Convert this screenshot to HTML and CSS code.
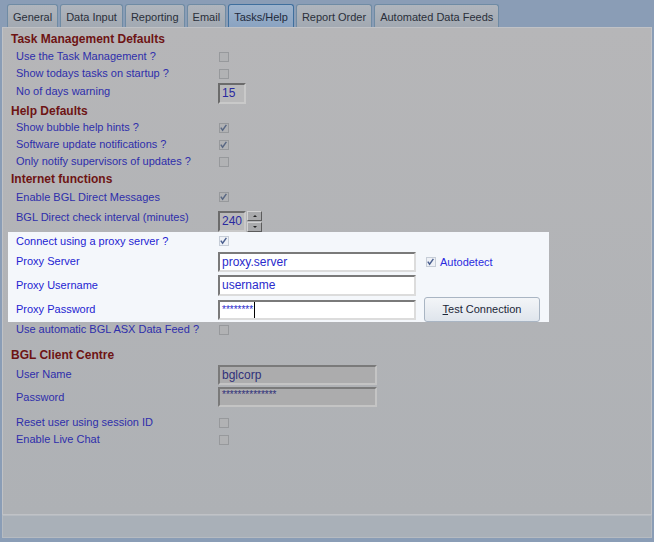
FILE: index.html
```html
<!DOCTYPE html>
<html lang="en">
<head>
  <meta charset="UTF-8" />
  <title>Tasks/Help</title>
  <link rel="stylesheet" href="styles.css">
</head>
<body>

<div class="window">
  <!-- Tab strip -->
  <div class="tabs">
    <span class="tab">General</span>
    <span class="tab">Data Input</span>
    <span class="tab">Reporting</span>
    <span class="tab">Email</span>
    <span class="tab active">Tasks/Help</span>
    <span class="tab">Report Order</span>
    <span class="tab">Automated Data Feeds</span>
  </div>

  <div class="panel">
    <div class="group">Task Management Defaults</div>
    <div class="row"><span class="lbl">Use the Task Management ?</span><span class="chk"></span></div>
    <div class="row"><span class="lbl">Show todays tasks on startup ?</span><span class="chk"></span></div>
    <div class="row field days"><span class="lbl lift">No of days warning</span><span class="inp small">15</span></div>

    <div class="group g2">Help Defaults</div>
    <div class="row"><span class="lbl">Show bubble help hints ?</span><span class="chk on"><svg viewBox="0 0 10 10"><path d="M2 4.6 L4 7.4 L8.2 1.6"/></svg></span></div>
    <div class="row"><span class="lbl">Software update notifications ?</span><span class="chk on"><svg viewBox="0 0 10 10"><path d="M2 4.6 L4 7.4 L8.2 1.6"/></svg></span></div>
    <div class="row"><span class="lbl">Only notify supervisors of updates ?</span><span class="chk"></span></div>

    <div class="group">Internet functions</div>
    <div class="row r18"><span class="lbl">Enable BGL Direct Messages</span><span class="chk on"><svg viewBox="0 0 10 10"><path d="M2 4.6 L4 7.4 L8.2 1.6"/></svg></span></div>
    <div class="row spin-row">
      <span class="lbl lift">BGL Direct check interval (minutes)</span>
      <span class="spin">
        <span class="inp small">240</span>
        <span class="spin-btns">
          <span class="spin-btn"><i class="up"></i></span>
          <span class="spin-btn"><i class="down"></i></span>
        </span>
      </span>
    </div>

    <!-- highlighted proxy block -->
    <div class="proxy">
      <div class="row r18"><span class="lbl">Connect using a proxy server ?</span><span class="chk on"><svg viewBox="0 0 10 10"><path d="M2 4.6 L4 7.4 L8.2 1.6"/></svg></span></div>
      <div class="row prow p1">
        <span class="lbl">Proxy Server</span>
        <span class="inp wide">proxy.server</span>
        <span class="auto"><span class="chk on"><svg viewBox="0 0 10 10"><path d="M2 4.6 L4 7.4 L8.2 1.6"/></svg></span>Autodetect</span>
      </div>
      <div class="row prow p2">
        <span class="lbl">Proxy Username</span>
        <span class="inp wide tall">username</span>
      </div>
      <div class="row prow p3">
        <span class="lbl">Proxy Password</span>
        <span class="inp wide stars">********<b class="caret"></b></span>
        <span class="btn"><u>T</u>est Connection</span>
      </div>
    </div>

    <div class="row r15"><span class="lbl">Use automatic BGL ASX Data Feed ?</span><span class="chk"></span></div>

    <div class="group g4">BGL Client Centre</div>
    <div class="row field r21"><span class="lbl">User Name</span><span class="inp grey">bglcorp</span></div>
    <div class="row field r24"><span class="lbl">Password</span><span class="inp grey stars">**************</span></div>
    <div class="row reset"><span class="lbl">Reset user using session ID</span><span class="chk"></span></div>
    <div class="row"><span class="lbl">Enable Live Chat</span><span class="chk"></span></div>
  </div>

  <div class="status"></div>
</div>

</body>
</html>
```

FILE: styles.css
```css
:root {
  --bg-blue: #8a9db6;
  --label: #2e2eab;
  --label-hi: #2424d2;
  --heading: #6e1414;
}

body {
  margin: 0;
  background-color: var(--bg-blue);
  font-family: "Liberation Sans", Arial, sans-serif;
  font-size: 11px;
}

.window {
  height: 542px;
  display: flex;
  flex-direction: column;
}

/* Tabs */
.tabs {
  display: flex;
  gap: 2px;
  height: 27px;
  padding: 4px 0 0 7px;
  box-sizing: border-box;
}

.tab {
  height: 23px;
  box-sizing: border-box;
  padding: 2px 5px 0;
  border: 1px solid #6f8ba4;
  border-bottom: none;
  border-radius: 3px 3px 0 0;
  background: linear-gradient(#afb5bd, #a2a9b2);
  color: #2a2f3a;
  font-size: 11px;
  line-height: 20px;
}

.tab.active {
  border-color: #3f6f9d;
  background: linear-gradient(#9db3cc, #8aa3c1);
  color: #1f2a3c;
}

/* Panel */
.panel {
  height: 488px;
  margin: 0 2px;
  padding-top: 2px;
  box-sizing: border-box;
  border: 1px solid #c0c2c6;
  background: linear-gradient(#b6b6b8, #aeb1b5);
}

.status {
  height: 23px;
  margin: 0 2px;
  box-sizing: border-box;
  border: 1px solid #b6bbc1;
  background-color: #a9b0b8;
}

.group {
  height: 18px;
  line-height: 18px;
  margin-left: 8px;
  font-size: 12px;
  font-weight: bold;
  color: var(--heading);
}

.group.g2 {
  height: 15px;
  line-height: 15px;
}

.group.g4 {
  margin-top: 9px;
}

.row {
  display: grid;
  grid-template-columns: 202px auto;
  align-items: center;
  justify-items: start;
  height: 17px;
  padding-left: 13px;
  color: var(--label);
}

.row.r15 { height: 15px; }
.row.r18 { height: 18px; }
.row.r21 { height: 21px; }
.row.r24 { height: 24px; }
.row.days { height: 22px; }
.row.reset { margin-top: 5px; }
.row.spin-row { height: 26px; }

.lbl {
  white-space: nowrap;
  line-height: 13px;
}

.lbl.lift {
  margin-bottom: 4px;
}

/* Checkbox */
.chk {
  width: 10px;
  height: 10px;
  margin-left: 1px;
  box-sizing: border-box;
  border: 1px solid #97999c;
  background-color: #b1b2b4;
  display: flex;
}

.chk svg {
  width: 10px;
  height: 10px;
  margin: -1px 0 0 -1px;
}

.chk svg path {
  fill: none;
  stroke: #586783;
  stroke-width: 1.6;
}

/* Inputs */
.inp {
  height: 20px;
  box-sizing: border-box;
  border: 2px solid;
  border-color: #6b6b6b #c9c9c9 #c9c9c9 #6b6b6b;
  background-color: #b9b9ba;
  padding: 0 2px;
  color: #2a2aa0;
  font-size: 12px;
  line-height: 16px;
  white-space: nowrap;
}

.inp.small {
  width: 28px;
  height: 21px;
  line-height: 17px;
}

.inp.grey {
  width: 159px;
  background-color: #acacad;
  border-color: #7a7a7a #c4c4c4 #c4c4c4 #7a7a7a;
  color: #30307a;
}

.inp.stars {
  font-size: 10px;
  line-height: 12px;
}

.spin {
  display: flex;
  gap: 1px;
  margin-top: 5px;
}

.spin-btns {
  display: flex;
  flex-direction: column;
  gap: 1px;
}

.spin-btn {
  width: 15px;
  height: 10px;
  box-sizing: border-box;
  border: 1px solid;
  border-color: #d2d2d2 #5c5c5c #5c5c5c #d2d2d2;
  background-color: #a9aaac;
  display: flex;
  justify-content: center;
  align-items: center;
}

.spin-btn i {
  width: 0;
  height: 0;
  border-left: 2px solid transparent;
  border-right: 2px solid transparent;
}

.spin-btn .up { border-bottom: 2px solid #222; }
.spin-btn .down { border-top: 2px solid #222; }

/* Highlighted proxy block */
.proxy {
  width: 541px;
  margin-left: 5px;
  height: 90px;
  background-color: #f4f7fb;
}

.proxy .row {
  padding-left: 8px;
  color: var(--label-hi);
}

.proxy .row.prow {
  grid-template-columns: 202px 198px auto;
}

.proxy .p1 { height: 23px; }
.proxy .p2 { height: 24px; }
.proxy .p3 { height: 25px; }

.proxy .chk {
  border-color: #c6cdd7;
  background-color: #eef1f6;
}

.proxy .chk svg path {
  stroke: #4a5f8f;
}

.inp.wide {
  width: 198px;
  background-color: #fff;
  border-color: #7a7a7a #dcdcdc #dcdcdc #7a7a7a;
  color: #2a2acc;
}

.inp.tall {
  height: 21px;
  line-height: 17px;
}

.inp.wide.stars {
  display: flex;
  align-items: center;
  line-height: 14px;
}

.caret {
  display: inline-block;
  width: 1px;
  height: 16px;
  background-color: #000;
  margin-left: 1px;
}

.auto {
  display: flex;
  align-items: center;
  gap: 4px;
  margin-left: 9px;
  color: #2a2ae0;
}

.btn {
  width: 116px;
  height: 25px;
  margin-left: 8px;
  box-sizing: border-box;
  border: 1px solid #a9b5c3;
  border-radius: 3px;
  background: linear-gradient(#f3f5f8, #dfe5ec);
  color: #1b2738;
  text-align: center;
  line-height: 23px;
  font-size: 11px;
}
```
